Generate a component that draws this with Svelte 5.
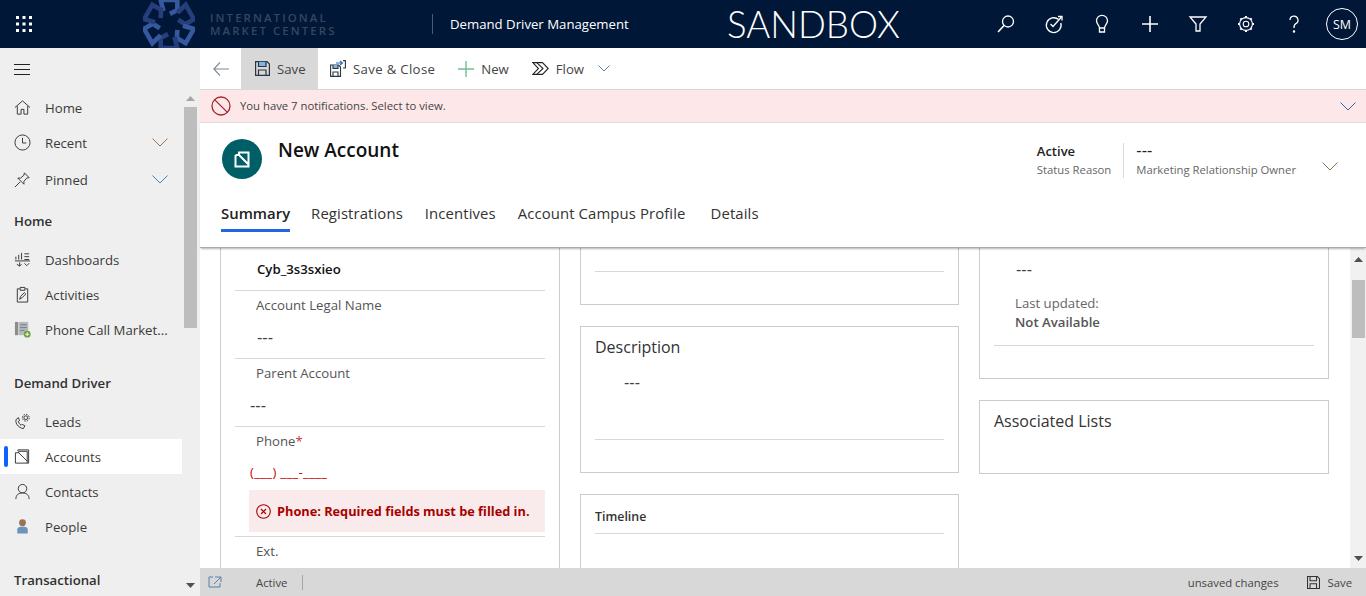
<script>
  const topIcons = ["search", "task", "bulb", "plus", "filter", "gear", "help"];
  const logoLinks = [0, 60, 120, 180, 240, 300];
  const gearTeeth = [0, 45, 90, 135, 180, 225, 270, 315];
  const tabs = ["Summary", "Registrations", "Incentives", "Account Campus Profile", "Details"];
</script>

<div class="app">
  <header class="topbar">
    <button class="waffle" aria-label="Apps">
      <svg width="17" height="16" viewBox="0 0 17 16" fill="#fff">
        {#each [0, 6.5, 13] as y}
          {#each [0, 6.5, 13] as x}
            <rect {x} {y} width="3" height="3" />
          {/each}
        {/each}
      </svg>
    </button>
    <svg class="logo" width="52" height="48" viewBox="-28 -26 56 52">
      {#each logoLinks as a, i}
        <path
          d="M-6 -14 L-9 -26 L9 -26 L9 -15 L1 -11"
          transform="rotate({a})"
          fill="none"
          stroke={i % 2 ? "#263f7c" : "#35599f"}
          stroke-width="5"
        />
      {/each}
    </svg>
    <div class="logotext">INTERNATIONAL<br />MARKET CENTERS</div>
    <div class="appname">Demand Driver Management</div>
    <div class="sandbox">SANDBOX</div>
    <div class="topicons">
      {#each topIcons as name}
        <button class="topicon" aria-label={name}>
          <svg width="20" height="20" viewBox="0 0 20 20" fill="none" stroke="#fff" stroke-width="1.3">
            {#if name === "search"}
              <circle cx="12" cy="7.5" r="5.5" />
              <path d="M8 11.5 L2 18" stroke-width="1.6" />
            {:else if name === "task"}
              <path d="M14.6 5.6 A7.4 7.4 0 1 0 16.8 9" />
              <path d="M6.5 10 L9 12.5 L17.5 3" />
              <path d="M14 2.5 H18 V6.5" />
            {:else if name === "bulb"}
              <path d="M7.5 14 C7.5 11 4.5 10 4.5 6.8 A5.5 5.5 0 0 1 15.5 6.8 C15.5 10 12.5 11 12.5 14 Z" />
              <path d="M7.5 14 V18 H12.5 V14" />
            {:else if name === "plus"}
              <path d="M10 2 V18 M2 10 H18" stroke-width="1.6" />
            {:else if name === "filter"}
              <path d="M2 3 H18 L12 10 V17 H8 V10 Z" />
            {:else if name === "gear"}
              <circle cx="10" cy="10" r="2.8" stroke-width="1.1" />
              <circle cx="10" cy="10" r="6.4" stroke-width="1.1" />
              {#each gearTeeth as a}
                <path d="M10 2 V3.6" transform="rotate({a} 10 10)" stroke-width="2" />
              {/each}
            {:else}
              <path d="M6 6 A4 4 0 1 1 11.5 9.8 C10 10.5 10 11.5 10 14" />
              <circle cx="10" cy="17.5" r="0.6" fill="#fff" />
            {/if}
          </svg>
        </button>
      {/each}
      <div class="avatar">SM</div>
    </div>
  </header>

  <div class="body">
    <aside class="sidebar">
      <nav class="nav">
        <div class="burger">
          <svg width="16" height="11" viewBox="0 0 16 11" stroke="#222" stroke-width="1"><path d="M0 .5 H16 M0 5.5 H16 M0 10.5 H16" /></svg>
        </div>
        <a class="item">
          <svg class="ico" viewBox="0 0 18 18"><path d="M1 9 L9 2 L17 9 M3.5 7.5 V16 H7.5 V11 H10.5 V16 H14.5 V7.5" /></svg>
          <span>Home</span>
        </a>
        <a class="item">
          <svg class="ico" viewBox="0 0 18 18"><circle cx="9" cy="9" r="8" /><path d="M9 4 V9.5 H13" /></svg>
          <span>Recent</span>
          <svg class="chev warm" viewBox="0 0 16 9"><path d="M.5 .5 L8 8 L15.5 .5" /></svg>
        </a>
        <a class="item pinned">
          <svg class="ico" viewBox="0 0 18 18"><path d="M1 17 L6.5 11.5 M11 2 L16 7 L13.5 7.5 L10.5 11 L10.5 14 L4 7.5 L7 7.5 L10.5 4.5 Z" /></svg>
          <span>Pinned</span>
          <svg class="chev cool" viewBox="0 0 16 9"><path d="M.5 .5 L8 8 L15.5 .5" /></svg>
        </a>
        <div class="group home">Home</div>
        <a class="item first">
          <svg class="ico" viewBox="0 0 18 18"><path d="M2 6 V9 M5 4 V9 M8 2 V9 M11 3 H16 M11 6 H16 M11 9 H16 M1 10.5 H17 M6 12 V16 M3 14 L6 16 L8 14 M11 13 L13.5 15.5 L16 13" /></svg>
          <span>Dashboards</span>
        </a>
        <a class="item">
          <svg class="ico" viewBox="0 0 18 18"><path d="M6 3 H3.5 V17 H14.5 V3 H12 M6.5 1.5 H11.5 V4.5 H6.5 Z M6 14 L7 11 L11 7 L12.5 8.5 L8.5 12.5 Z" /></svg>
          <span>Activities</span>
        </a>
        <a class="item">
          <svg class="ico plain" viewBox="0 0 18 18">
            <rect x="1" y="1" width="3.5" height="14" fill="#8c8c8c" />
            <rect x="5" y="1" width="10" height="14" fill="#b8b8b8" />
            <path d="M6.5 4 H13.5 M6.5 7 H13.5 M6.5 10 H11" stroke="#5d7f9c" fill="none" />
            <circle cx="14" cy="14" r="3.6" fill="#6da33c" />
            <path d="M12 14 H16 M14 12 V16" stroke="#fff" fill="none" />
          </svg>
          <span>Phone Call Market...</span>
        </a>
        <div class="group">Demand Driver</div>
        <a class="item first">
          <svg class="ico" viewBox="0 0 18 18"><path d="M3 6 C0 9 4 16 10 16.5 L11.5 13.5 L8.5 12 L7.5 13 C6 12 5 10.5 4.5 9 L5.8 8.2 L4.8 5 Z" /><circle cx="12.5" cy="5" r="2" /><circle cx="12.5" cy="5" r="3.6" stroke-dasharray="1.6 1.2" /></svg>
          <span>Leads</span>
        </a>
        <a class="item active">
          <svg class="ico" viewBox="0 0 18 18"><path d="M1.5 5 H5 L14 14 V16 H1.5 Z M4 3 V2 H15.5 V16 H14 M5 5 V3.5 H14 V14" /></svg>
          <span>Accounts</span>
        </a>
        <a class="item">
          <svg class="ico" viewBox="0 0 18 18"><circle cx="9" cy="6" r="4.5" /><path d="M2 17 C2 12.5 5 10.5 9 10.5 C13 10.5 16 12.5 16 17" /></svg>
          <span>Contacts</span>
        </a>
        <a class="item">
          <svg class="ico plain" viewBox="0 0 18 18">
            <circle cx="9" cy="5" r="3.6" fill="#9a7355" />
            <path d="M3.5 16.5 V12 C3.5 10 6 9 9 9 C12 9 14.5 10 14.5 12 V16.5 Z" fill="#6b93bd" />
          </svg>
          <span>People</span>
        </a>
        <div class="group">Transactional</div>
      </nav>
      <div class="sidescroll">
        <svg class="arrow" width="9" height="5" viewBox="0 0 9 5"><path d="M4.5 0 L9 5 H0 Z" fill="#a6a6a6" /></svg>
        <div class="sidethumb"></div>
        <svg class="arrow down" width="9" height="5" viewBox="0 0 9 5"><path d="M4.5 5 L9 0 H0 Z" fill="#505050" /></svg>
      </div>
    </aside>

    <main class="main">
      <div class="commands">
        <button class="back" aria-label="Back">
          <svg width="16" height="14" viewBox="0 0 16 14" fill="none" stroke="#7f8a96" stroke-width="1.1"><path d="M7 .5 L.8 7 L7 13.5 M1 7 H16" /></svg>
        </button>
        <button class="cmd save">
          <svg width="15" height="15" viewBox="0 0 15 15" fill="none" stroke="#2b3440" stroke-width="1.2"><path d="M.6 .6 H12 L14.4 3 V14.4 H.6 Z" /><path d="M3.5 .8 V5.5 H11 V.8" fill="#7db4e6" /><path d="M3.5 14 V9 H11 V14" /></svg>
          Save
        </button>
        <button class="cmd saveclose">
          <svg width="16" height="17" viewBox="0 0 16 17" fill="none" stroke="#2b3440" stroke-width="1.1"><path d="M.6 5 H8.5 L10.5 7 V16.4 H.6 Z M3 16 V12 H8 V16" /><path d="M3 5 V8.5 H8 V5" fill="#7db4e6" /><path d="M6 3 H12 M10 1 L12.5 3 L10 5" stroke="#2b6cb0" /><path d="M13 .6 H15.4 V8 H13" /></svg>
          <span>Save &amp; Close</span>
        </button>
        <button class="cmd new">
          <svg width="16" height="16" viewBox="0 0 16 16" stroke="#6fbf8f" stroke-width="1.4"><path d="M8 0 V16 M0 8 H16" /></svg>
          New
        </button>
        <button class="cmd flow">
          <svg width="17" height="13" viewBox="0 0 17 13" fill="none" stroke="#222" stroke-width="1.1"><path d="M.8 .6 H10.5 L16.2 6.5 L10.5 12.4 H.8 L6.5 6.5 Z" /><path d="M5 .8 L11 6.5 L5 12.2" /></svg>
          Flow
        </button>
        <svg class="flowchev" width="12" height="7" viewBox="0 0 12 7" fill="none" stroke="#5b7fa8"><path d="M.5 .5 L6 6 L11.5 .5" /></svg>
      </div>

      <div class="notice">
        <svg width="20" height="20" viewBox="0 0 20 20" fill="none" stroke="#a4262c" stroke-width="1.3"><circle cx="10" cy="10" r="9" /><path d="M3.6 3.6 L16.4 16.4" /></svg>
        <span>You have 7 notifications. Select to view.</span>
        <svg class="noticechev" width="16" height="9" viewBox="0 0 16 9" fill="none" stroke="#2b6cb0"><path d="M.5 .5 L8 8 L15.5 .5" /></svg>
      </div>

      <div class="formhead">
        <div class="headrow">
          <div class="badge">
            <svg width="16" height="17" viewBox="0 0 16 17" fill="none" stroke="#fff" stroke-width="2"><path d="M1.5 4 V15.5 H14.5 V1.5 H5 V4 H1.5 M5.5 4.5 L14 13" /></svg>
          </div>
          <h1>New Account</h1>
          <div class="headfields">
            <div class="hf">
              <b>Active</b>
              <small>Status Reason</small>
            </div>
            <div class="hf owner">
              <b class="dash">---</b>
              <small>Marketing Relationship Owner</small>
            </div>
            <svg class="headchev" width="16" height="9" viewBox="0 0 16 9" fill="none" stroke="#8f7050"><path d="M.5 .5 L8 8 L15.5 .5" /></svg>
          </div>
        </div>
        <div class="tabs">
          {#each tabs as t, i}
            <div class="tab" class:on={i === 0}>{t}</div>
          {/each}
        </div>
      </div>

      <div class="scrollarea">
        <div class="columns">
          <section class="card col1">
            <div class="namerow">Cyb_3s3sxieo</div>
            <div class="field">
              <label>Account Legal Name</label>
              <div class="val dash">---</div>
            </div>
            <div class="field">
              <label>Parent Account</label>
              <div class="val left dash">---</div>
            </div>
            <div class="field phone">
              <label>Phone<i>*</i></label>
              <div class="val left red">(___) ___-____</div>
              <div class="err">
                <svg width="15" height="15" viewBox="0 0 15 15" fill="none" stroke="#a80000" stroke-width="1.1"><circle cx="7.5" cy="7.5" r="6.8" /><path d="M5 5 L10 10 M10 5 L5 10" /></svg>
                Phone: Required fields must be filled in.
              </div>
            </div>
            <div class="field">
              <label>Ext.</label>
            </div>
          </section>

          <div class="stack">
            <section class="card clip a">
              <div class="rule"></div>
            </section>
            <section class="card desc">
              <h2>Description</h2>
              <div class="val dash">---</div>
              <div class="rule"></div>
            </section>
            <section class="card timeline">
              <h3>Timeline</h3>
              <div class="rule"></div>
            </section>
          </div>

          <div class="stack">
            <section class="card clip b">
              <div class="val dash">---</div>
              <div class="updated">Last updated:</div>
              <div class="updated strong">Not Available</div>
              <div class="rule"></div>
            </section>
            <section class="card assoc">
              <h2>Associated Lists</h2>
            </section>
          </div>
        </div>
        <div class="mainscroll">
          <svg width="9" height="5" viewBox="0 0 9 5"><path d="M4.5 0 L9 5 H0 Z" fill="#505050" /></svg>
          <div class="mainthumb"></div>
          <svg class="down" width="9" height="5" viewBox="0 0 9 5"><path d="M4.5 5 L9 0 H0 Z" fill="#505050" /></svg>
        </div>
      </div>

      <footer class="status">
        <svg width="14" height="12" viewBox="0 0 14 12" fill="none" stroke="#5b7fa8"><path d="M5 1 H1 V11 H12 V7 M7 1 H13 V6 M13 1 L6 8" /></svg>
        <span class="st-active">Active</span>
        <span class="st-sep"></span>
        <span class="st-unsaved">unsaved changes</span>
        <svg class="st-ico" width="13" height="13" viewBox="0 0 15 15" fill="none" stroke="#333" stroke-width="1.2"><path d="M.6 .6 H12 L14.4 3 V14.4 H.6 Z M3.5 .8 V5.5 H11 V.8 M3.5 14 V9 H11 V14" /></svg>
        <span>Save</span>
      </footer>
    </main>
  </div>
</div>

<style>
  :global(body) {
    margin: 0;
    font-family: "Open Sans", "Noto Sans", sans-serif;
    color: #333;
    overflow: hidden;
  }
  button {
    font: inherit;
    color: inherit;
    background: none;
    border: 0;
    padding: 0;
  }
  .app {
    height: 596px;
    display: flex;
    flex-direction: column;
    overflow: hidden;
  }

  /* top bar */
  .topbar {
    flex: 0 0 48px;
    display: flex;
    align-items: center;
    background: #001737;
    color: #fff;
    overflow: hidden;
  }
  .waffle {
    width: 48px;
    height: 48px;
    display: flex;
    align-items: center;
    justify-content: center;
  }
  .logo {
    margin-left: 95px;
  }
  .logotext {
    margin-left: 15px;
    width: 222px;
    font-size: 11.4px;
    line-height: 13px;
    font-weight: 600;
    letter-spacing: 2.1px;
    color: #36465f;
    white-space: nowrap;
  }
  .appname {
    height: 20px;
    padding-left: 17px;
    border-left: 1px solid #4a5a72;
    font-size: 13.2px;
    line-height: 20px;
    width: 260px;
    box-sizing: content-box;
  }
  .sandbox {
    margin-left: 17px;
    font-family: Lato, sans-serif;
    font-weight: 300;
    font-size: 36.7px;
    line-height: 48px;
  }
  .topicons {
    margin-left: auto;
    display: flex;
    align-items: center;
    padding-right: 8px;
  }
  .topicon {
    width: 48px;
    height: 48px;
    display: flex;
    align-items: center;
    justify-content: center;
  }
  .avatar {
    margin-left: 8px;
    width: 30px;
    height: 30px;
    border: 1px solid #fff;
    border-radius: 50%;
    display: flex;
    align-items: center;
    justify-content: center;
    font-size: 12.5px;
  }

  .body {
    flex: 1;
    display: flex;
    min-height: 0;
  }

  /* sidebar */
  .sidebar {
    flex: 0 0 200px;
    display: flex;
    background: #efefef;
    overflow: hidden;
  }
  .nav {
    flex: 0 0 182px;
    font-size: 13.2px;
    color: #3b3a39;
  }
  .burger {
    height: 42px;
    padding-left: 14px;
    display: flex;
    align-items: center;
  }
  .item,
  .group {
    height: 35px;
    display: flex;
    align-items: center;
  }
  .item {
    padding-left: 14px;
    position: relative;
  }
  .item span {
    margin-left: 14px;
  }
  .pinned {
    margin-top: 2px;
  }
  .first {
    margin-top: 4px;
  }
  .group {
    margin-top: 18px;
    padding-left: 14px;
    font-weight: 600;
    color: #323130;
  }
  .group.home {
    margin-top: 6px;
  }
  .active {
    background: #fff;
  }
  .active::before {
    content: "";
    position: absolute;
    left: 4px;
    top: 7px;
    width: 4px;
    height: 21px;
    border-radius: 2px;
    background: #0f62fe;
  }
  .ico {
    width: 17px;
    height: 17px;
    flex: none;
    fill: none;
    stroke: #333;
    stroke-width: 1;
  }
  .ico.plain {
    stroke: none;
  }
  .chev {
    width: 16px;
    height: 9px;
    margin-left: auto;
    margin-right: 14px;
    fill: none;
  }
  .chev.warm {
    stroke: #9c7350;
  }
  .chev.cool {
    stroke: #4f7ea8;
  }
  .sidescroll {
    flex: 0 0 13px;
    margin-left: 2px;
    display: flex;
    flex-direction: column;
    align-items: center;
  }
  .arrow {
    margin-top: 48px;
    flex: none;
  }
  .arrow.down {
    margin-top: 255px;
  }
  .sidethumb {
    width: 13px;
    height: 221px;
    margin-top: 6px;
    background: #bdbdbd;
    flex: none;
  }

  /* main column */
  .main {
    flex: 1;
    min-width: 0;
    display: flex;
    flex-direction: column;
    background: #fff;
  }
  .commands {
    flex: 0 0 41px;
    display: flex;
    align-items: center;
    border-bottom: 1px solid #d8d8d8;
    font-size: 13.2px;
    color: #444;
  }
  .back {
    width: 41px;
    height: 41px;
    padding-left: 13px;
    display: flex;
    align-items: center;
  }
  .cmd {
    height: 41px;
    display: flex;
    align-items: center;
    gap: 7px;
  }
  .save {
    width: 77px;
    padding-left: 14px;
    box-sizing: border-box;
    background: #d8d8d8;
  }
  .saveclose {
    margin-left: 12px;
  }
  .saveclose span {
    letter-spacing: 0.33px;
  }
  .new {
    margin-left: 23px;
  }
  .flow {
    margin-left: 23px;
  }
  .flowchev {
    margin-left: 14px;
  }
  .notice {
    flex: 0 0 32px;
    display: flex;
    align-items: center;
    padding-left: 11px;
    gap: 9px;
    background: #fde7e9;
    border-bottom: 1px solid #e3dcdc;
    font-size: 11.3px;
    color: #444;
  }
  .notice span {
    margin-top: -1px;
  }
  .noticechev {
    margin-left: auto;
    margin-right: 10px;
  }
  .formhead {
    flex: 0 0 125px;
    position: relative;
    z-index: 1;
    box-sizing: border-box;
    border-bottom: 1px solid #aaa;
    box-shadow: 0 2px 2px -1px rgba(0, 0, 0, 0.3);
    background: #fff;
  }
  .headrow {
    height: 76px;
    display: flex;
    align-items: flex-start;
    padding: 16px 0 0 22px;
    box-sizing: border-box;
  }
  .badge {
    width: 40px;
    height: 40px;
    flex: none;
    border-radius: 50%;
    background: #005e66;
    display: flex;
    align-items: center;
    justify-content: center;
  }
  h1 {
    margin: -2px 0 0 16px;
    font-size: 19px;
    line-height: 26px;
    font-weight: 600;
    color: #111;
  }
  .headfields {
    margin-left: auto;
    display: flex;
    align-items: flex-start;
    padding-right: 28px;
    margin-top: 4px;
  }
  .hf {
    display: flex;
    flex-direction: column;
    gap: 3px;
    padding-right: 12px;
  }
  .hf b {
    font-size: 13px;
    line-height: 16px;
    font-weight: 600;
    color: #222;
  }
  .hf b.dash {
    font-family: "Liberation Sans", sans-serif;
    font-size: 16px;
    font-weight: 400;
  }
  .hf small {
    font-size: 11.3px;
    line-height: 16px;
    color: #666;
  }
  .owner {
    border-left: 1px solid #d8d8d8;
    padding-left: 12px;
    padding-right: 26px;
  }
  .headchev {
    margin-top: 19px;
  }
  .tabs {
    display: flex;
    gap: 22px;
    padding-left: 21px;
    font-size: 14.9px;
    letter-spacing: 0.1px;
    color: #333;
  }
  .tab {
    height: 33px;
    line-height: 28px;
    box-sizing: border-box;
  }
  .tab.on {
    margin-right: -1px;
    font-weight: 600;
    letter-spacing: 0;
    border-bottom: 3px solid #2266e3;
    color: #222;
  }
  .tab:last-child {
    margin-left: 3px;
  }

  /* form body */
  .scrollarea {
    flex: 1;
    min-height: 0;
    display: flex;
    overflow: hidden;
  }
  .columns {
    flex: 1;
    min-width: 0;
    display: grid;
    grid-template-columns: 340px 379px 350px;
    gap: 20px;
    padding-left: 20px;
    align-items: start;
    font-size: 13.2px;
  }
  .stack {
    display: flex;
    flex-direction: column;
    gap: 21px;
  }
  .card {
    border: 1px solid #ccc;
    box-sizing: border-box;
    padding: 0 14px;
  }
  .card.col1 {
    border-top: 0;
    border-bottom: 0;
    height: 320px;
    overflow: hidden;
  }
  .clip {
    border-top: 0;
  }
  .rule {
    height: 1px;
    background: #d8d8d8;
  }
  .namerow {
    height: 42px;
    padding-left: 22px;
    line-height: 42px;
    font-weight: 600;
    color: #111;
  }
  .field {
    height: 68px;
    box-sizing: border-box;
    border-top: 1px solid #d8d8d8;
    padding-top: 5px;
  }
  .field.phone {
    height: 110px;
  }
  .field label {
    display: block;
    margin-left: 21px;
    line-height: 19px;
    color: #555;
  }
  .field i {
    color: #d13438;
    font-style: normal;
  }
  .val {
    margin: 13px 0 0 22px;
    line-height: 19px;
    color: #444;
  }
  .val.dash {
    font-family: "Liberation Sans", sans-serif;
    font-size: 16px;
  }
  .val.left {
    margin-left: 15px;
  }
  .val.red {
    margin-top: 12px;
    color: #d00000;
    letter-spacing: 0.3px;
  }
  .err {
    margin: 8px 0 0 14px;
    height: 42px;
    display: flex;
    align-items: center;
    gap: 6px;
    padding-left: 7px;
    background: #f9ebeb;
    color: #a80000;
    font-weight: 700;
    font-size: 12.75px;
  }
  .card.a {
    height: 57px;
    padding-top: 23px;
  }
  .desc {
    height: 147px;
  }
  h2 {
    margin: 0;
    padding-top: 10px;
    font-size: 16px;
    line-height: 21px;
    font-weight: 400;
    color: #333;
  }
  .desc .val {
    margin: 15px 0 0 29px;
  }
  .desc .rule {
    margin-top: 47px;
  }
  .timeline {
    height: 90px;
  }
  h3 {
    margin: 0;
    padding-top: 12px;
    height: 38px;
    box-sizing: border-box;
    font-size: 12.4px;
    line-height: 19px;
    font-weight: 600;
    color: #333;
  }
  .card.b {
    height: 131px;
    padding-top: 1px;
  }
  .b .val {
    margin: 11px 0 0 22px;
  }
  .updated {
    margin: 15px 0 0 21px;
    line-height: 19px;
    color: #666;
  }
  .updated.strong {
    margin-top: 0;
    font-weight: 600;
    color: #555;
  }
  .b .rule {
    margin-top: 13px;
  }
  .assoc {
    height: 74px;
  }
  .mainscroll {
    flex: 0 0 16px;
    background: #f1f1f1;
    display: flex;
    flex-direction: column;
    align-items: center;
    padding-top: 9px;
    box-sizing: border-box;
  }
  .mainscroll svg {
    flex: none;
  }
  .mainthumb {
    width: 13px;
    height: 58px;
    margin-top: 18px;
    background: #bdbdbd;
    flex: none;
  }
  .mainscroll .down {
    margin-top: auto;
    margin-bottom: 7px;
  }

  /* status bar */
  .status {
    flex: 0 0 28px;
    display: flex;
    align-items: center;
    padding: 0 14px 0 8px;
    background: #d8d8d8;
    font-size: 11.3px;
    color: #444;
  }
  .st-active {
    margin-left: 34px;
  }
  .st-sep {
    margin-left: 15px;
    width: 1px;
    height: 15px;
    background: #a6a6a6;
  }
  .st-unsaved {
    margin-left: auto;
  }
  .st-ico {
    margin: 0 8px 0 28px;
  }
</style>
